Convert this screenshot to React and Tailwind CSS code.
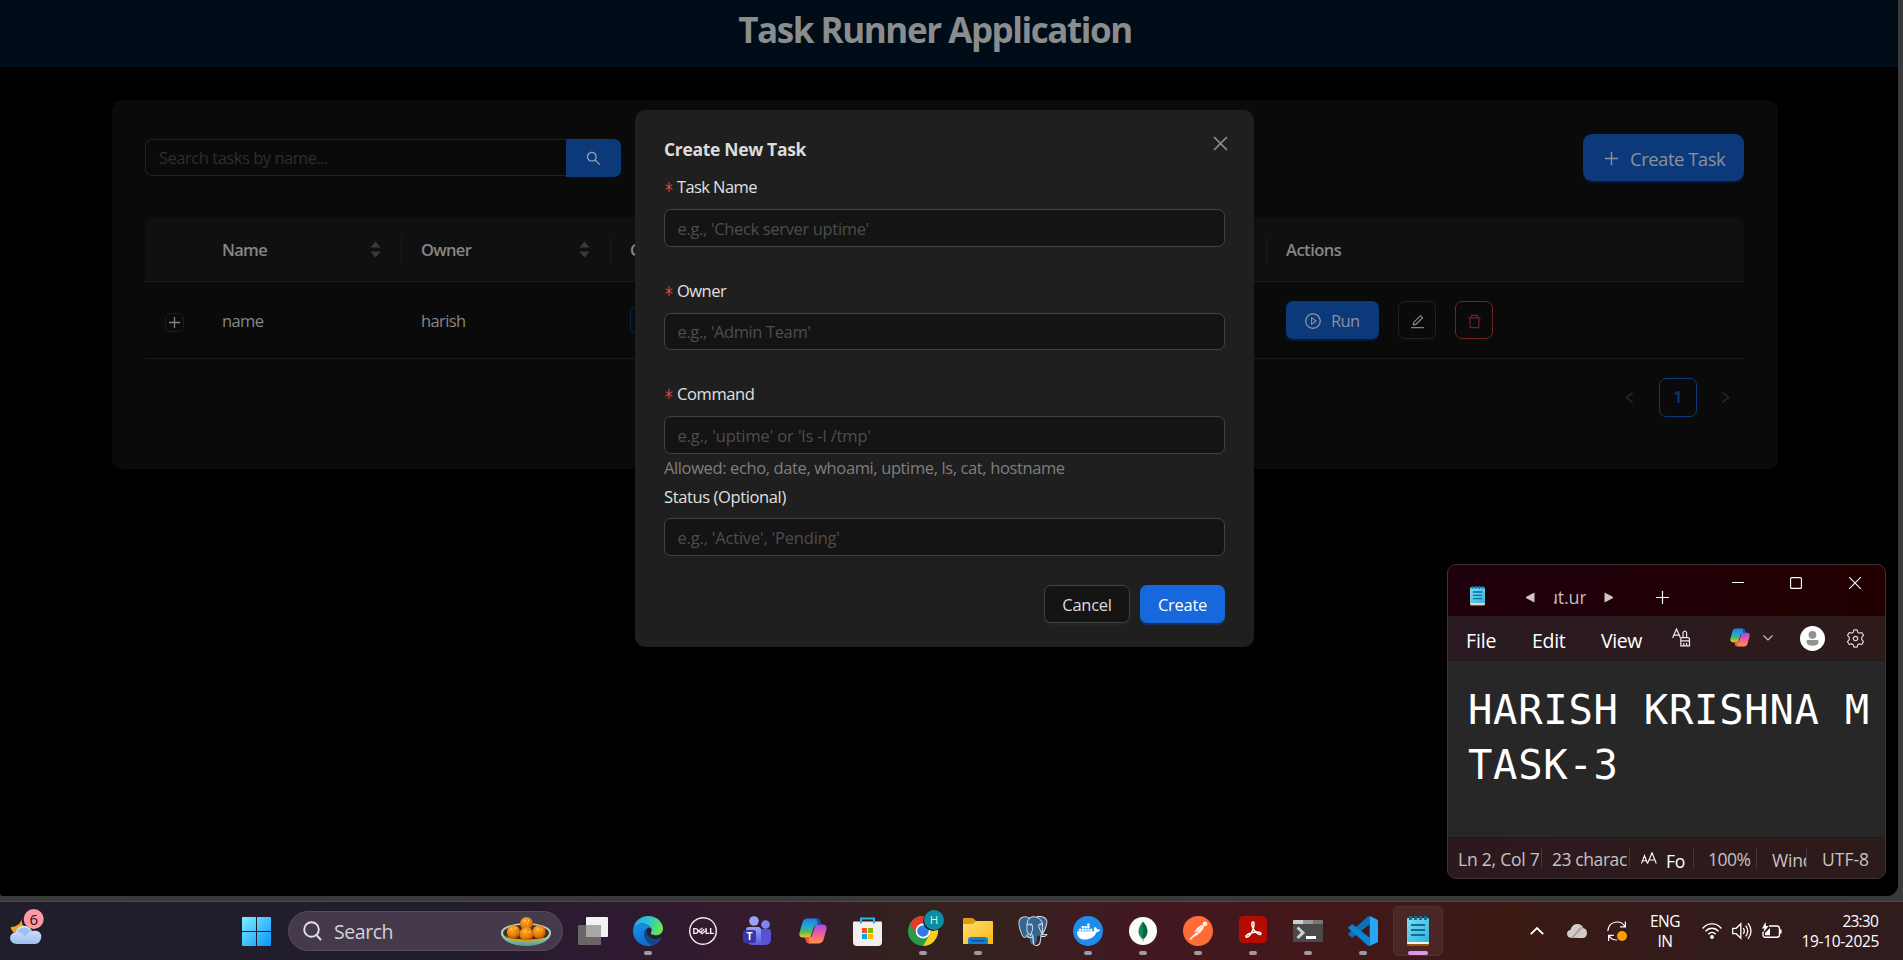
import React from "react";
import {
  AiOutlineSearch,
  AiOutlinePlus,
  AiOutlineClose,
  AiOutlinePlayCircle,
  AiOutlineEdit,
  AiOutlineDelete,
  AiOutlineLeft,
  AiOutlineRight,
} from "react-icons/ai";
import { FaDocker } from "react-icons/fa";
import { SiDell, SiPostgresql, SiPostman } from "react-icons/si";

/* ---------- Web page behind the dialog ---------- */

function Sorter() {
  return (
    <svg className="-mt-[2px] h-[17px] w-[11px]" viewBox="0 0 11 17" fill="#393939">
      <path d="M5.5 0.4 10.6 6.4H0.4z" />
      <path d="M5.5 16.6 10.6 10.6H0.4z" />
    </svg>
  );
}

function TaskTable() {
  return (
    <div className="mt-[36px]">
      <div className="flex h-[65px] items-center rounded-t-[9px] border-b border-[#1b1b1b] bg-[#101010] text-[16.5px] font-semibold tracking-[-0.7px] text-[#868686]">
        <div className="w-[58px]" />
        <div className="flex h-[27px] w-[199px] items-center justify-between border-r border-[#1b1b1b] pt-[2px] pr-[20px] pl-[19px]">
          <span>Name</span>
          <Sorter />
        </div>
        <div className="flex h-[27px] w-[209px] items-center justify-between border-r border-[#1b1b1b] pt-[2px] pr-[20px] pl-[19px]">
          <span>Owner</span>
          <Sorter />
        </div>
        <div className="flex h-[27px] w-[656px] items-center border-r border-[#1b1b1b] pt-[2px] pl-[19px]">
          <span>Command</span>
        </div>
        <div className="pt-[2px] pl-[19px] tracking-[-0.5px]">Actions</div>
      </div>
      <div className="flex h-[77px] items-center border-b border-[#1b1b1b] text-[16.5px] tracking-[-0.6px] text-[#868686]">
        <div className="w-[58px] pt-[4px] pl-[19.5px]">
          <div className="flex h-[19px] w-[19px] items-center justify-center rounded-[6px] border border-[#1d1d1d]">
            <svg className="h-[11px] w-[11px]" viewBox="0 0 11 11" stroke="#828282" strokeWidth="1.3">
              <path d="M5.5 0v11M0 5.5h11" />
            </svg>
          </div>
        </div>
        <div className="w-[199px] pt-[2px] pl-[19px]">name</div>
        <div className="w-[209px] pt-[2px] pl-[19px]">harish</div>
        <div className="w-[656px] pl-[19px]">
          <div className="h-[26px] w-[60px] rounded-[5px] border border-[#0a2342] bg-[#080c14]" />
        </div>
        <div className="flex items-center pl-[19px]">
          <div className="flex h-[38px] w-[93px] items-center rounded-[7px] bg-[#0b3979] pl-[18px] text-[#8a929e] shadow-[0_2px_0_#0a1730]">
            <AiOutlinePlayCircle className="mt-px h-[18px] w-[18px]" />
            <span className="ml-[9px] pt-[2px]">Run</span>
          </div>
          <div className="ml-[19px] flex h-[38px] w-[38px] items-center justify-center rounded-[7px] border border-[#212121] pt-[2px] shadow-[0_2px_0_#0e0e0e]">
            <AiOutlineEdit className="h-[17px] w-[17px] text-[#828282]" />
          </div>
          <div className="ml-[19px] flex h-[38px] w-[38px] items-center justify-center rounded-[7px] border border-[#702424] pt-[2px] shadow-[0_2px_0_#100a0a]">
            <AiOutlineDelete className="h-[17px] w-[17px] text-[#702424]" />
          </div>
        </div>
      </div>
      <div className="mt-[19px] flex h-[39px] items-center justify-end text-[#303030]">
        <AiOutlineLeft className="h-[15px] w-[15px]" />
        <div className="ml-[22px] flex h-[39px] w-[38px] items-center justify-center rounded-[7px] border border-[#0b3979] text-[16.5px] font-semibold text-[#0b3979]">
          1
        </div>
        <AiOutlineRight className="mr-[11px] ml-[21px] h-[15px] w-[15px]" />
      </div>
    </div>
  );
}

function TaskPage() {
  return (
    <div className="h-[896px] w-[1898px] overflow-hidden rounded-br-[11px] rounded-bl-[3px] bg-black">
      <header className="flex h-[67px] justify-center bg-[#000c17] pr-[28px]">
        <h1 className="text-[35px] leading-[59px] font-bold tracking-[-1.45px] whitespace-nowrap text-[#8a8c8e]">
          Task Runner Application
        </h1>
      </header>
      <main className="mt-[33px] ml-[112px] h-[369px] w-[1666px] rounded-[10px] bg-[#0a0a0a] pt-[34px] pr-[34px] pl-[33px]">
        <div className="flex items-start justify-between">
          <div className="mt-[5px] flex items-start">
            <div className="flex h-[37px] w-[421px] items-center rounded-l-[7px] border border-r-0 border-[#212121] pt-[2px] pl-[13px] text-[16.5px] tracking-[-0.47px] text-[#2e2e2e]">
              Search tasks by name...
            </div>
            <div className="flex h-[38px] w-[55px] items-center justify-center rounded-r-[7px] bg-[#0b3979]">
              <AiOutlineSearch className="h-[17px] w-[17px] text-[#99a2b0]" />
            </div>
          </div>
          <div className="flex h-[47px] w-[161px] items-center rounded-[9px] bg-[#0b3979] pl-[19px] text-[18.5px] tracking-[-0.5px] text-[#8a929e] shadow-[0_2px_0_#0a1730]">
            <AiOutlinePlus className="mt-px h-[19px] w-[19px]" />
            <span className="ml-[9px] pt-[3px]">Create Task</span>
          </div>
        </div>
        <TaskTable />
      </main>
    </div>
  );
}

/* ---------- Create dialog ---------- */

function Field({ label, placeholder, required, labelClass, inputClass }) {
  return (
    <div className="flex flex-col text-[16.5px]">
      <div className={"flex items-center text-[#e0e0e0] " + labelClass}>
        {required && (
          <svg className="mr-[4px] ml-px h-[10px] w-[8px]" viewBox="0 0 8 10" stroke="#dc4446" strokeWidth="1.1">
            <path d="M4 0v10M0.6 2.6l6.8 4.8M7.4 2.6 0.6 7.4" />
          </svg>
        )}
        <span>{label}</span>
      </div>
      <div
        className={
          "flex items-center rounded-[7px] border border-[#424242] bg-[#141414] pt-[2px] pl-[12.5px] text-[#4d4d4d] " +
          inputClass
        }
      >
        {placeholder}
      </div>
    </div>
  );
}

function CreateDialog() {
  return (
    <div className="absolute top-[110px] left-[635px] h-[537px] w-[619px] rounded-[10px] bg-[#1f1f1f] px-[29px] pt-[25px]">
      <div className="flex items-start justify-between">
        <h2 className="text-[17.5px] leading-[28px] font-bold tracking-[-0.32px] text-[#dcdcdc]">Create New Task</h2>
        <AiOutlineClose className="-mt-[2px] -mr-[6px] h-[21px] w-[21px] text-[#8b8b8b]" />
      </div>
      <div className="mt-[5px]">
        <Field label="Task Name" placeholder="e.g., 'Check server uptime'" required labelClass="h-[38px] tracking-[-0.6px]" inputClass="mt-[3px] h-[38px] tracking-[-0.34px]" />
      </div>
      <div className="mt-[25px]">
        <Field label="Owner" placeholder="e.g., 'Admin Team'" required labelClass="h-[38px] tracking-[-0.5px]" inputClass="mt-[3px] h-[37px] tracking-[-0.38px]" />
      </div>
      <div className="mt-[25px]">
        <Field label="Command" placeholder="e.g., 'uptime' or 'ls -l /tmp'" required labelClass="h-[38px] tracking-[-0.4px]" inputClass="mt-[3px] h-[38px] tracking-[-0.13px]" />
      </div>
      <p className="text-[16.5px] leading-[27px] tracking-[-0.38px] text-[#7e7e7e]">
        Allowed: echo, date, whoami, uptime, ls, cat, hostname
      </p>
      <Field label="Status (Optional)" placeholder="e.g., 'Active', 'Pending'" labelClass="h-[32px] tracking-[-0.38px]" inputClass="mt-[5px] h-[38px] tracking-[-0.19px]" />
      <div className="mt-[29px] flex justify-end gap-[10px] text-[16.5px] tracking-[-0.25px]">
        <div className="flex h-[38px] w-[86px] items-center justify-center rounded-[7px] border border-[#424242] bg-[#141414] pt-[2px] text-[#dcdcdc] shadow-[0_2px_0_#252525]">
          Cancel
        </div>
        <div className="flex h-[38px] w-[85px] items-center justify-center rounded-[7px] bg-[#1668dc] pt-[2px] text-white shadow-[0_2px_0_#15325b]">
          Create
        </div>
      </div>
    </div>
  );
}

/* ---------- Shared app logos ---------- */

function NotepadIcon({ className }) {
  return (
    <svg className={className} viewBox="0 0 22 30">
      <defs>
        <linearGradient id="np" x1="0" y1="0" x2="1" y2="1">
          <stop offset="0" stopColor="#7fdcf0" />
          <stop offset="1" stopColor="#2fb3dc" />
        </linearGradient>
      </defs>
      <rect y="26" width="22" height="4" rx="1" fill="#a3500f" />
      <rect y="5" width="22" height="23" rx="1" fill="#f3f3f3" />
      <rect y="2" width="22" height="24" rx="1" fill="url(#np)" />
      <path d="M4 9h14M4 14h14M4 19h14" stroke="#0a6f9a" strokeWidth="2" />
      <path d="M3.5 0v4M8.5 0v4M13.500 0v4M18.500 0v4" stroke="#0a6f9a" strokeWidth="3" />
    </svg>
  );
}

function CopilotIcon({ className }) {
  const ribbon =
    "M8.500 0.500h9c2 0 3 1 3.500 3l1 3.500h-4c-2 0-2.700 1-3.200 2.600l-2.600 7.400c-.6 2-1.800 2.500-3.500 2.500H4c-3 0-4.200-2-3.400-5l3-10.500C4.400 1.700 6 .5 8.500 .5z";
  return (
    <svg className={className} viewBox="0 0 28 26">
      <defs>
        <linearGradient id="cpa" x1="0" y1="0" x2="0" y2="1">
          <stop offset="0" stopColor="#1d7fe0" />
          <stop offset="0.4" stopColor="#22a5d8" />
          <stop offset="0.7" stopColor="#52b95a" />
          <stop offset="1" stopColor="#f5cb1c" />
        </linearGradient>
        <linearGradient id="cpb" x1="0" y1="1" x2="0" y2="0">
          <stop offset="0" stopColor="#a24be8" />
          <stop offset="0.5" stopColor="#ee5c9c" />
          <stop offset="1" stopColor="#ff9346" />
        </linearGradient>
      </defs>
      <path d={ribbon} fill="url(#cpa)" />
      <g transform="rotate(180 14 13)">
        <path d={ribbon} fill="url(#cpb)" />
      </g>
      <path d="M17 .6c2.500 0 3.400.9 4 2.900l1 3.500h-3.500c-.3-3-.8-5-1.500-6.400z" fill="#1a50b8" />
      <path d="M11 25.400c-2.500 0-3.400-.9-4-2.900l-1-3.500h3.500c.3 3 .8 5 1.500 6.400z" fill="#f0542d" />
    </svg>
  );
}

/* ---------- Notepad window ---------- */

function NotepadWindow() {
  return (
    <div className="absolute top-[564px] left-[1447px] flex h-[315px] w-[439px] flex-col overflow-hidden rounded-[9px] border border-[#3b3233] bg-[#272727]">
      <div className="flex h-[51px] bg-linear-to-r from-[#1f000e] to-[#220000]">
        <NotepadIcon className="mt-[21px] ml-[22px] h-[20px] w-[15px]" />
        <svg className="mt-[27px] ml-[41px] h-[11px] w-[9px]" viewBox="0 0 9 11" fill="#cfc6c8">
          <path d="M8.500 0.500v10L0.300 6.200q-.6-.7 0-1.400z" />
        </svg>
        <div className="mt-[19px] ml-[19px] h-[26px] w-[32px] overflow-hidden text-[18px] leading-[26px] tracking-[-0.2px] text-[#c5babd]">
          <span className="-ml-[7px]">ut.ur</span>
        </div>
        <svg className="mt-[27px] ml-[18px] h-[11px] w-[9px]" viewBox="0 0 9 11" fill="#cfc6c8">
          <path d="M0.500 0.500v10L8.700 6.200q.6-.7 0-1.400z" />
        </svg>
        <svg className="mt-[26px] ml-[43px] h-[13px] w-[13px]" viewBox="0 0 13 13" stroke="#ffffff" strokeWidth="1.2">
          <path d="M6.500 0v13M0 6.500h13" />
        </svg>
        <svg className="mt-[12px] ml-[63px] h-[12px] w-[12px]" viewBox="0 0 12 12" stroke="#ffffff" strokeWidth="1">
          <path d="M0 5.500h12" />
        </svg>
        <svg className="mt-[12px] ml-[46px] h-[12px] w-[12px]" viewBox="0 0 12 12" stroke="#ffffff" strokeWidth="1.100" fill="none">
          <rect x=".6" y=".6" width="10.800" height="10.800" rx="1" />
        </svg>
        <svg className="mt-[12px] ml-[47px] h-[12px] w-[12px]" viewBox="0 0 12 12" stroke="#ffffff" strokeWidth="1.100">
          <path d="M0 0l12 12M12 0 0 12" />
        </svg>
      </div>
      <div className="flex h-[45px] items-center border-b border-[#231617] bg-linear-to-r from-[#2a1a22] to-[#2d1b1a] text-[19.5px] leading-[28px] text-white">
        <span className="mt-[6px] ml-[18px] w-[66px] tracking-[-0.1px]">File</span>
        <span className="mt-[6px] w-[69px] tracking-[-0.3px]">Edit</span>
        <span className="mt-[6px] w-[71px] tracking-[-0.4px]">View</span>
        <svg className="h-[19px] w-[19px]" viewBox="0 0 19 19" stroke="#f0ecec" strokeWidth="1.200" fill="none">
          <path d="M.6 10 4.500 1l4 9M1.900 7.200h5.200" />
          <path d="M11 9.500V4.500q1.800-2.600 3.600 0v5M8.800 17.800v-6.500q0-1.700 1.700-1.700h5.300q1.700 0 1.700 1.700v6.500zM8.800 12.800h8.700M11.800 17.500v-2.500M14.600 17.500v-2.500" />
        </svg>
        <CopilotIcon className="ml-[39px] h-[19px] w-[20px]" />
        <svg className="ml-[13px] h-[6px] w-[10px]" viewBox="0 0 10 6" stroke="#cfc6c8" strokeWidth="1.100" fill="none">
          <path d="M.5 .5 5 5 9.500 .5" />
        </svg>
        <svg className="mt-px ml-[27px] h-[25px] w-[25px]" viewBox="0 0 25 25">
          <circle cx="12.500" cy="12.500" r="12.500" fill="#ffffff" />
          <circle cx="12.500" cy="8.800" r="3.900" fill="#929292" />
          <path d="M7.800 14h9.400q1.300 0 1.300 1.400 0 4.300-6 4.300t-6-4.300q0-1.400 1.300-1.400z" fill="#929292" />
        </svg>
        <svg className="mt-px ml-[21px] h-[19px] w-[19px]" viewBox="0 0 19 19" stroke="#d8d2d2" strokeWidth="1.200" fill="none" strokeLinejoin="round">
          <path d="M7.900 .8h3.200l.7 2.500 1.500.9 2.500-.7 1.700 2.900-1.800 1.900v2.400l1.800 1.900-1.700 2.900-2.500-.7-1.500.9-.7 2.500H7.900l-.7-2.500-1.500-.9-2.500.7-1.700-2.900 1.800-1.900V8.300L1.500 6.400l1.700-2.900 2.500.7 1.500-.9z" />
          <circle cx="9.500" cy="9.500" r="2.200" />
        </svg>
      </div>
      <div className="h-[177px] bg-[#272727] pt-[22px] pl-[20px] font-['DejaVu_Sans_Mono','Liberation_Mono',monospace] text-[40.500px] leading-[55px] tracking-[0.740px] whitespace-nowrap text-white">
        <div>HARISH KRISHNA M</div>
        <div>TASK-3</div>
      </div>
      <div className="flex h-[41px] items-center border-t border-[#241718] bg-linear-to-r from-[#2b191e] to-[#2d1b1b] pl-[10px] text-[17.500px] tracking-[-0.220px] whitespace-nowrap text-[#c9c1c2]">
        <div className="flex h-[20px] w-[84px] items-center border-r border-[#44363a] pt-[3px]">Ln 2, Col 7</div>
        <div className="flex h-[20px] w-[88px] items-center border-r border-[#44363a] pt-[3px] pl-[10px] tracking-[-0.420px]">23 charac</div>
        <div className="flex h-[20px] w-[64px] items-center border-r border-[#44363a] pl-[11px]">
          <svg className="h-[12px] w-[16px]" viewBox="0 0 16 12" stroke="#ffffff" strokeWidth="1.100" fill="none">
            <path d="M.5 11.500 3.500 3.500l3 8M1.500 8.800h4M6.500 11.500 11 .8l4.300 10.700M8 8h6" />
          </svg>
          <span className="mt-[7px] ml-[9px] text-white">Fo</span>
        </div>
        <div className="flex h-[20px] w-[63px] items-center border-r border-[#44363a] pt-[3px] pl-[14px] tracking-[-0.500px]">100%</div>
        <div className="flex h-[20px] w-[50px] items-center border-r border-[#44363a] pt-[3px] pl-[15px]">
          <span className="w-[34px] overflow-hidden leading-[26px]">Wind</span>
        </div>
        <div className="pt-[3px] pl-[15px] tracking-[0px]">UTF-8</div>
      </div>
    </div>
  );
}

/* ---------- Taskbar ---------- */

function Slot({ children, running, active }) {
  return (
    <div
      className={
        "relative flex h-[58px] w-[55px] items-center justify-center " +
        (running ? "after:absolute after:bottom-[5px] after:h-[4px] after:w-[8px] after:rounded-full after:bg-[#a39a9e]" : "")
      }
    >
      {active && <div className="absolute h-[50px] w-[50px] rounded-[5px] border border-[#512f2d] bg-[#4a2726]" />}
      <div className="relative">{children}</div>
      {active && <div className="absolute bottom-[5px] h-[4px] w-[20px] rounded-full bg-[#dc98e8]" />}
    </div>
  );
}

function WeatherWidget() {
  return (
    <svg className="h-[38px] w-[38px]" viewBox="0 0 38 38">
      <defs>
        <linearGradient id="cl" x1="0" y1="0" x2="0" y2="1">
          <stop offset="0" stopColor="#dceaff" />
          <stop offset="1" stopColor="#9fbdf0" />
        </linearGradient>
      </defs>
      <path d="M12 8c-1 6 0 12 9 16H3C2 22 0 20 1 19c6 0 11-4 11-11z" fill="#f6a11e" />
      <path d="M7 36c-9 0-9-11-1-12 1-7 12-9 16-1 9-2 11 5 8 10-1 2-3 3-5 3z" fill="url(#cl)" />
      <path d="M7 24c2-5 11-7 14 0-4 1-5 3-6 5-2-4-5-5-8-5z" fill="#86aef0" opacity=".6" />
      <circle cx="23.700" cy="11" r="10" fill="#ff99a4" />
      <text x="23.700" y="16.500" textAnchor="middle" fontSize="15" fill="#2b1218">
        6
      </text>
    </svg>
  );
}

function WindowsLogo() {
  return (
    <svg className="h-[29px] w-[29px]" viewBox="0 0 29 29">
      <defs>
        <linearGradient id="win" gradientUnits="userSpaceOnUse" x1="0" y1="0" x2="29" y2="29">
          <stop offset="0" stopColor="#7df0ff" />
          <stop offset="1" stopColor="#0a93fb" />
        </linearGradient>
      </defs>
      <path fill="url(#win)" d="M1 0h13v14H0V1q0-1 1-1zM15 0h13q1 0 1 1v13H15zM0 15h14v14H1q-1 0-1-1zM15 15h14v13q0 1-1 1H15z" />
    </svg>
  );
}

function LadduBowl() {
  return (
    <svg className="h-[29px] w-[50px]" viewBox="0 0 50 29">
      <defs>
        <radialGradient id="lad" cx=".4" cy=".3" r=".8">
          <stop offset="0" stopColor="#ffae2b" />
          <stop offset=".6" stopColor="#e87a08" />
          <stop offset="1" stopColor="#8f3b05" />
        </radialGradient>
        <linearGradient id="bowl" x1="0" y1="0" x2="0" y2="1">
          <stop offset="0" stopColor="#c5dccb" />
          <stop offset="1" stopColor="#4f9d88" />
        </linearGradient>
      </defs>
      <ellipse cx="25" cy="15.500" rx="25" ry="9.500" fill="#b9cdc0" />
      <ellipse cx="25" cy="16" rx="23" ry="8.300" fill="#3a3122" />
      <path d="M4 18c6 8 36 8 42 0-2 6-36 6-42 0z" fill="#c99a1c" />
      <circle cx="25.500" cy="6.500" r="6.500" fill="url(#lad)" />
      <circle cx="12.500" cy="15" r="6.700" fill="url(#lad)" />
      <circle cx="38" cy="15" r="6.700" fill="url(#lad)" />
      <circle cx="25.500" cy="17" r="7" fill="url(#lad)" />
      <path d="M0 16C3 21.500 12 24.300 25 24.300S47 21.500 50 16C50 23 39 29 25 29S0 23 0 16z" fill="url(#bowl)" />
      <path d="M7 21.500c9 3 27 3 36 0" stroke="#d8a520" strokeWidth="1.400" fill="none" />
      <path d="M23 4h1M27 3.500h1M26 6.500h1M10 12h1M14 11h1M24 14.500h1M28 15h1M36 12h1M40 13h1" stroke="#ffe36b" strokeWidth="1.300" />
    </svg>
  );
}

function TaskView() {
  return (
    <svg className="h-[28px] w-[30px]" viewBox="0 0 30 28">
      <rect x="0" y="8" width="23" height="20" rx="1" fill="#6a6668" />
      <rect x="8" y="0" width="22" height="20" rx="1" fill="#f2f2f2" />
      <path d="M8 8h15v12H8z" fill="#a9a7a8" />
    </svg>
  );
}

function EdgeIcon() {
  return (
    <svg className="h-[30px] w-[30px]" viewBox="0 0 30 30">
      <defs>
        <linearGradient id="eg1" x1="0" y1=".2" x2="1" y2=".5">
          <stop offset="0" stopColor="#2aa8ea" />
          <stop offset=".5" stopColor="#2fc5cf" />
          <stop offset="1" stopColor="#6be84f" />
        </linearGradient>
        <linearGradient id="eg2" x1="0" y1="0" x2="0.300" y2="1">
          <stop offset="0" stopColor="#1a93e4" />
          <stop offset="1" stopColor="#0a6fd0" />
        </linearGradient>
      </defs>
      <path d="M.3 13C1.200 5.500 7.500 0 15 0c8.500 0 15 6 15 12.500 0 4-3 6.700-6.700 6.700-3 0-5.600-1-5.600-2.300 0-.8 1-1.200 1-3C18.700 10.500 14 7.500 9.500 7.500 5.500 7.500 2 9.500.3 13z" fill="url(#eg1)" />
      <path d="M0 15c0-4.500 4-7.500 9.500-7.500 4 0 8.500 2.500 9 6-.5-1.200-1.800-1.800-3-1.800-4 1.800-4.500 6-3.500 9.300 1.500 5 5.500 8 8.500 8-1.500.6-3.600 1-5.500 1C6.500 30 0 23 0 15z" fill="url(#eg2)" />
      <path d="M15.500 11.700c-2.300 1-4.700 3.400-4.300 7.300.5 5.500 4.600 9.800 9.600 9.900 3.300-1.300 5.700-3.500 7.300-6 .5-.8-.2-1.300-.9-.9-1.400.7-3 1-4.700 1-5 0-9-3.400-9-7.500 0-1.600.8-3 2-3.800z" fill="#114a8b" />
    </svg>
  );
}

function TeamsIcon() {
  return (
    <svg className="mr-[2px] h-[30px] w-[29px]" viewBox="0 0 29 30">
      <defs>
        <linearGradient id="tm" x1="0" y1="0" x2="0" y2="1">
          <stop offset="0" stopColor="#8fa5ff" />
          <stop offset="1" stopColor="#5b5bd8" />
        </linearGradient>
      </defs>
      <circle cx="22.500" cy="8.500" r="4.300" fill="#7f85f5" />
      <path d="M17 13h8q3 0 3 3v7q0 6-6 6h-5z" fill="#5a50d6" />
      <circle cx="11" cy="5" r="4.800" fill="#97a3fc" />
      <path d="M6 11h9q3 0 3 3v9q0 6 3 6H10q-7 0-7-7v-8q0-3 3-3z" fill="url(#tm)" />
      <rect x="0" y="14" width="13" height="13" rx="2.500" fill="#3b35a8" />
      <text x="6.500" y="24.300" textAnchor="middle" fontSize="10.500" fontWeight="700" fill="#ffffff">
        T
      </text>
    </svg>
  );
}

function StoreIcon() {
  return (
    <svg className="mr-px h-[29px] w-[29px]" viewBox="0 0 29 29">
      <path d="M1 4.500h27q1 0 1 1V25q0 4-4 4H4q-4 0-4-4V5.500q0-1 1-1z" fill="#efefef" />
      <path d="M8 6.500V1.500h13v5" stroke="#2eb3ee" strokeWidth="2" fill="none" />
      <path d="M9 11h5v5H9z" fill="#f25022" />
      <path d="M15 11h5v5h-5z" fill="#7fba00" />
      <path d="M9 17h5v5H9z" fill="#00a4ef" />
      <path d="M15 17h5v5h-5z" fill="#ffb900" />
    </svg>
  );
}

function ChromeIcon() {
  return (
    <div className="relative">
      <svg className="h-[30px] w-[30px]" viewBox="0 0 30 30">
        <circle cx="15" cy="15" r="15" fill="#2a9a47" />
        <path d="M28 7.500H15l6.500 11.300L15 30A15 15 0 0 0 28 7.500z" fill="#fdc922" />
        <path d="M2 7.500A15 15 0 0 1 28 7.500H15L8.500 18.800z" fill="#e33b2e" />
        <circle cx="15" cy="15" r="7.400" fill="#ffffff" />
        <circle cx="15" cy="15" r="5.800" fill="#2f7bea" />
      </svg>
      <div className="absolute -top-[6px] left-[16px] flex h-[20px] w-[20px] items-center justify-center rounded-full bg-[#0b8fa0] text-[11.500px] text-[#d5eef0] shadow-[-1px_1px_0_#16181a]">
        H
      </div>
    </div>
  );
}

function FolderIcon() {
  return (
    <svg className="h-[27px] w-[30px]" viewBox="0 0 30 27">
      <defs>
        <linearGradient id="fo" x1="0" y1="0" x2="1" y2="1">
          <stop offset="0" stopColor="#ffdd6e" />
          <stop offset="1" stopColor="#fbb914" />
        </linearGradient>
      </defs>
      <path d="M0 1q0-1 1-1h8q1 0 2 1l2 2v4H0z" fill="#dd9c0b" />
      <path d="M0 6h9q1 0 2-1l2-2h16q1 0 1 1v22H0z" fill="url(#fo)" />
      <path d="M5 26v-4q0-3 3-3h14q3 0 3 3v4z" fill="#1480d4" />
      <path d="M8.500 22.700h13" stroke="#0b4c8c" strokeWidth="1.400" />
    </svg>
  );
}

function PostgresIcon() {
  return (
    <div className="relative h-[30px] w-[30px]">
      <svg className="absolute h-[30px] w-[30px]" viewBox="0 0 24 24">
        <path
          d="M3.500 1C6 .4 8 .8 9.500 1.300 12 .3 14 .5 15.500 1c3-.8 5.500-.3 7 1.800 1.200 2.500-.5 7-2.500 10.700l2.500 1-2.500 1.500-4.500-.3c-.3 3-.5 6.300-2.700 7-2.300.7-3.300-1-3.300-6.700L5 16.500C2.500 14 1 9 .8 5 .8 2.800 1.800 1.400 3.500 1z"
          fill="#336791"
        />
      </svg>
      <SiPostgresql className="absolute h-[30px] w-[30px] text-[#dfe6ec]" />
    </div>
  );
}

function MongoIcon() {
  return (
    <svg className="h-[28px] w-[28px]" viewBox="0 0 28 28">
      <circle cx="14" cy="14" r="14" fill="#fbfbfb" />
      <path d="M14 4.500c-3 3.500-4.500 6.500-4.500 10 0 3.500 2 6 4.500 8z" fill="#0f8a53" />
      <path d="M14 4.500c3 3.500 4.500 6.500 4.500 10 0 3.500-2 6-4.500 8z" fill="#04643d" />
      <path d="M14 21v3.500" stroke="#7fa89a" strokeWidth="1" />
    </svg>
  );
}

function AcrobatIcon() {
  return (
    <svg className="mb-[4px] h-[27px] w-[28px]" viewBox="0 0 28 27">
      <rect width="28" height="27" rx="4.500" fill="#b30b00" />
      <path
        d="M13.800 6c2.200-.3 1 5.500-.3 8.500-1.700 3.800-4 6.800-5.800 6.700-2.300-.4.500-3.700 6.300-4.700 4.500-.8 8-.3 7.900 1.300-.3 2-4-.2-6.400-3C12.700 11.500 12 6.200 13.800 6z"
        stroke="#ffffff"
        strokeWidth="1.500"
        fill="none"
      />
    </svg>
  );
}

function TerminalIcon() {
  return (
    <svg className="h-[22px] w-[30px]" viewBox="0 0 30 22">
      <rect width="30" height="22" rx="1.500" fill="#4a4a4a" />
      <path d="M1 0h9v4H0V1q0-1 1-1z" fill="#cfcfcf" />
      <path d="M10 0h10v4H10z" fill="#9a9a9a" />
      <path d="M20 0h9q1 0 1 1v3H20z" fill="#767676" />
      <path d="M4.500 7.500 10 12.700 4.500 18" stroke="#cfcfcf" strokeWidth="3" fill="none" />
      <path d="M13 17.500h10" stroke="#ffffff" strokeWidth="3" />
    </svg>
  );
}

function VsCodeIcon() {
  return (
    <svg className="h-[30px] w-[30px]" viewBox="0 0 30 30">
      <path d="M21.700 8.300 5 21.300q-.8.600-1.600 0L.8 18.900q-.8-.8 0-1.700L19.900.6q.9-.8 1.800-.5z" fill="#0a70b8" />
      <path d="M21.700 21.700 5 8.700q-.8-.6-1.600 0L.8 11.100q-.8.800 0 1.700l19.100 16.600q.9.800 1.800.5z" fill="#0b84d6" />
      <path d="M21.700.1V30l7.300-3.500q1-.5 1-1.600V5.100q0-1.100-1-1.600z" fill="#27a7f3" />
    </svg>
  );
}

function Tray() {
  return (
    <div className="ml-auto flex items-center pr-[23px] text-[15.500px] text-white">
      <div className="flex w-[32px] justify-center">
        <svg className="h-[8px] w-[14px]" viewBox="0 0 14 8" stroke="#ffffff" strokeWidth="1.800" fill="none">
          <path d="M.8 7.200 7 1l6.200 6.200" />
        </svg>
      </div>
      <div className="flex w-[48px] justify-center">
        <svg className="h-[14px] w-[20px]" viewBox="0 0 20 14">
          <path d="M4.500 14C1.500 14 0 12 0 9.800 0 7.500 1.700 6 3.600 5.700 4.500 2 7.500 0 10.500 0c3 0 5 1.800 6 4.300 2.300.3 3.500 2.300 3.500 4.700 0 3-2 5-4.500 5z" fill="#d2cccc" />
          <path d="M4 13.500 13 3.500q2-1.200 3.500.8L8.500 14H5z" fill="#aaa3a3" />
          <path d="M7.500 13.500l8.500-9" stroke="#ece8e8" strokeWidth="1" />
        </svg>
      </div>
      <div className="flex w-[32px] justify-center">
        <svg className="h-[20px] w-[20px]" viewBox="0 0 20 20" stroke="#ffffff" strokeWidth="1.200" fill="none">
          <path d="M.8 10C1 4.500 5 1 10 1c3.500 0 6.500 1.600 8 4.800M18.400 .5v5.300h-5.300" />
          <path d="M10 19c-3.500 0-6.500-1.600-8-4.600M1.600 20v-5.600h5.300" />
          <circle cx="15" cy="15" r="5" fill="#ff9a0a" stroke="none" />
        </svg>
      </div>
      <div className="w-[64px] text-center leading-[20px] tracking-[-0.600px]">
        <div>ENG</div>
        <div>IN</div>
      </div>
      <div className="flex w-[30px] justify-center">
        <svg className="h-[16px] w-[20px]" viewBox="0 0 20 16" stroke="#ffffff" strokeWidth="1.400" fill="none">
          <path d="M.6 5.500C5.500-.7 14.500-.7 19.400 5.500M3.500 8.400c3.400-4.200 9.600-4.200 13 0M6.400 11.200c2-2.400 5.200-2.400 7.200 0" />
          <circle cx="10" cy="14" r="1.900" fill="#ffffff" stroke="none" />
        </svg>
      </div>
      <div className="flex w-[30px] justify-center">
        <svg className="h-[18px] w-[20px]" viewBox="0 0 20 18" stroke="#ffffff" strokeWidth="1.300" fill="none">
          <path d="M.7 6.300h3.500L8.800 1.800v14.400L4.200 11.700H.7zM11.300 6q2 3 0 6M13.700 3.600q4 5.400 0 10.800M16 1.200q6 7.800 0 15.600" />
        </svg>
      </div>
      <div className="flex w-[30px] justify-center pb-[2px]">
        <svg className="h-[17px] w-[20px]" viewBox="0 0 20 17" stroke="#ffffff" strokeWidth="1.400" fill="none">
          <path d="M7 4h8q2.500 0 2.500 2.500v6.300q0 2.500-2.500 2.500H3.500Q1 15.300 1 12.800v-3" />
          <path d="M18 7.500h1.600v4H18z" fill="#ffffff" stroke="none" />
          <path d="M3 13.300V11L8 6v7.300zM3.500 0 0 6.500h2.500L1.500 10.500 6.500 4H4z" fill="#ffffff" stroke="none" />
        </svg>
      </div>
      <div className="w-[93px] pr-px text-right leading-[20px] whitespace-nowrap">
        <div className="pr-px tracking-[-0.800px]">23:30</div>
        <div className="tracking-[-0.330px]">19-10-2025</div>
      </div>
    </div>
  );
}

function Taskbar() {
  return (
    <div className="mt-[5px] flex h-[59px] items-center border-t border-[#52444a]">
      <div className="flex h-[58px] w-full items-center bg-[linear-gradient(90deg,#211e2c_0%,#221d2d_24%,#2c1a31_31%,#351a2d_39%,#32211f_47%,#35221f_52%,#421722_60%,#43181a_68%,#40181a_74%,#3b1913_79%,#351b19_86%,#301c1d_100%)]">
        <div className="w-[242px] pb-[9px] pl-[10px]">
          <WeatherWidget />
        </div>
        <WindowsLogo />
        <div className="mr-[2.500px] ml-[17px] flex h-[40px] w-[275px] items-center rounded-full border border-[#574b5c] bg-[#443a4c] pl-[14px] text-[19.500px] tracking-[-0.450px] text-[#d5d1d8]">
          <svg className="h-[20px] w-[19px]" viewBox="0 0 19 20" stroke="#e4e1e6" strokeWidth="1.900" fill="none">
            <circle cx="8.500" cy="8.500" r="7.300" />
            <path d="M13.500 14l4.500 5" />
          </svg>
          <span className="ml-[12px] pt-[2px]">Search</span>
          <span className="mr-[11px] ml-auto">
            <LadduBowl />
          </span>
        </div>
        <Slot><TaskView /></Slot>
        <Slot running><EdgeIcon /></Slot>
        <Slot><SiDell className="h-[28px] w-[28px] text-[#f1eef1]" /></Slot>
        <Slot><TeamsIcon /></Slot>
        <Slot><CopilotIcon className="h-[26px] w-[28px]" /></Slot>
        <Slot><StoreIcon /></Slot>
        <Slot running><ChromeIcon /></Slot>
        <Slot running><FolderIcon /></Slot>
        <Slot><PostgresIcon /></Slot>
        <Slot running>
          <div className="flex h-[30px] w-[30px] items-center justify-center rounded-full bg-[#1d8ceb]">
            <FaDocker className="h-[23px] w-[23px] text-white" />
          </div>
        </Slot>
        <Slot running><MongoIcon /></Slot>
        <Slot running>
          <div className="relative flex h-[30px] w-[30px] items-center justify-center">
            <div className="absolute h-[26px] w-[26px] rounded-full bg-white" />
            <SiPostman className="relative h-[30px] w-[30px] text-[#ff6c37]" />
          </div>
        </Slot>
        <Slot running><AcrobatIcon /></Slot>
        <Slot running><TerminalIcon /></Slot>
        <Slot running><VsCodeIcon /></Slot>
        <Slot active><NotepadIcon className="h-[30px] w-[22px]" /></Slot>
        <Tray />
      </div>
    </div>
  );
}

export default function App() {
  return (
    <div className="relative h-[960px] w-[1903px] overflow-hidden bg-[#3a3a3a] font-['Open_Sans','Noto_Sans',sans-serif]">
      <TaskPage />
      <CreateDialog />
      <NotepadWindow />
      <Taskbar />
    </div>
  );
}
